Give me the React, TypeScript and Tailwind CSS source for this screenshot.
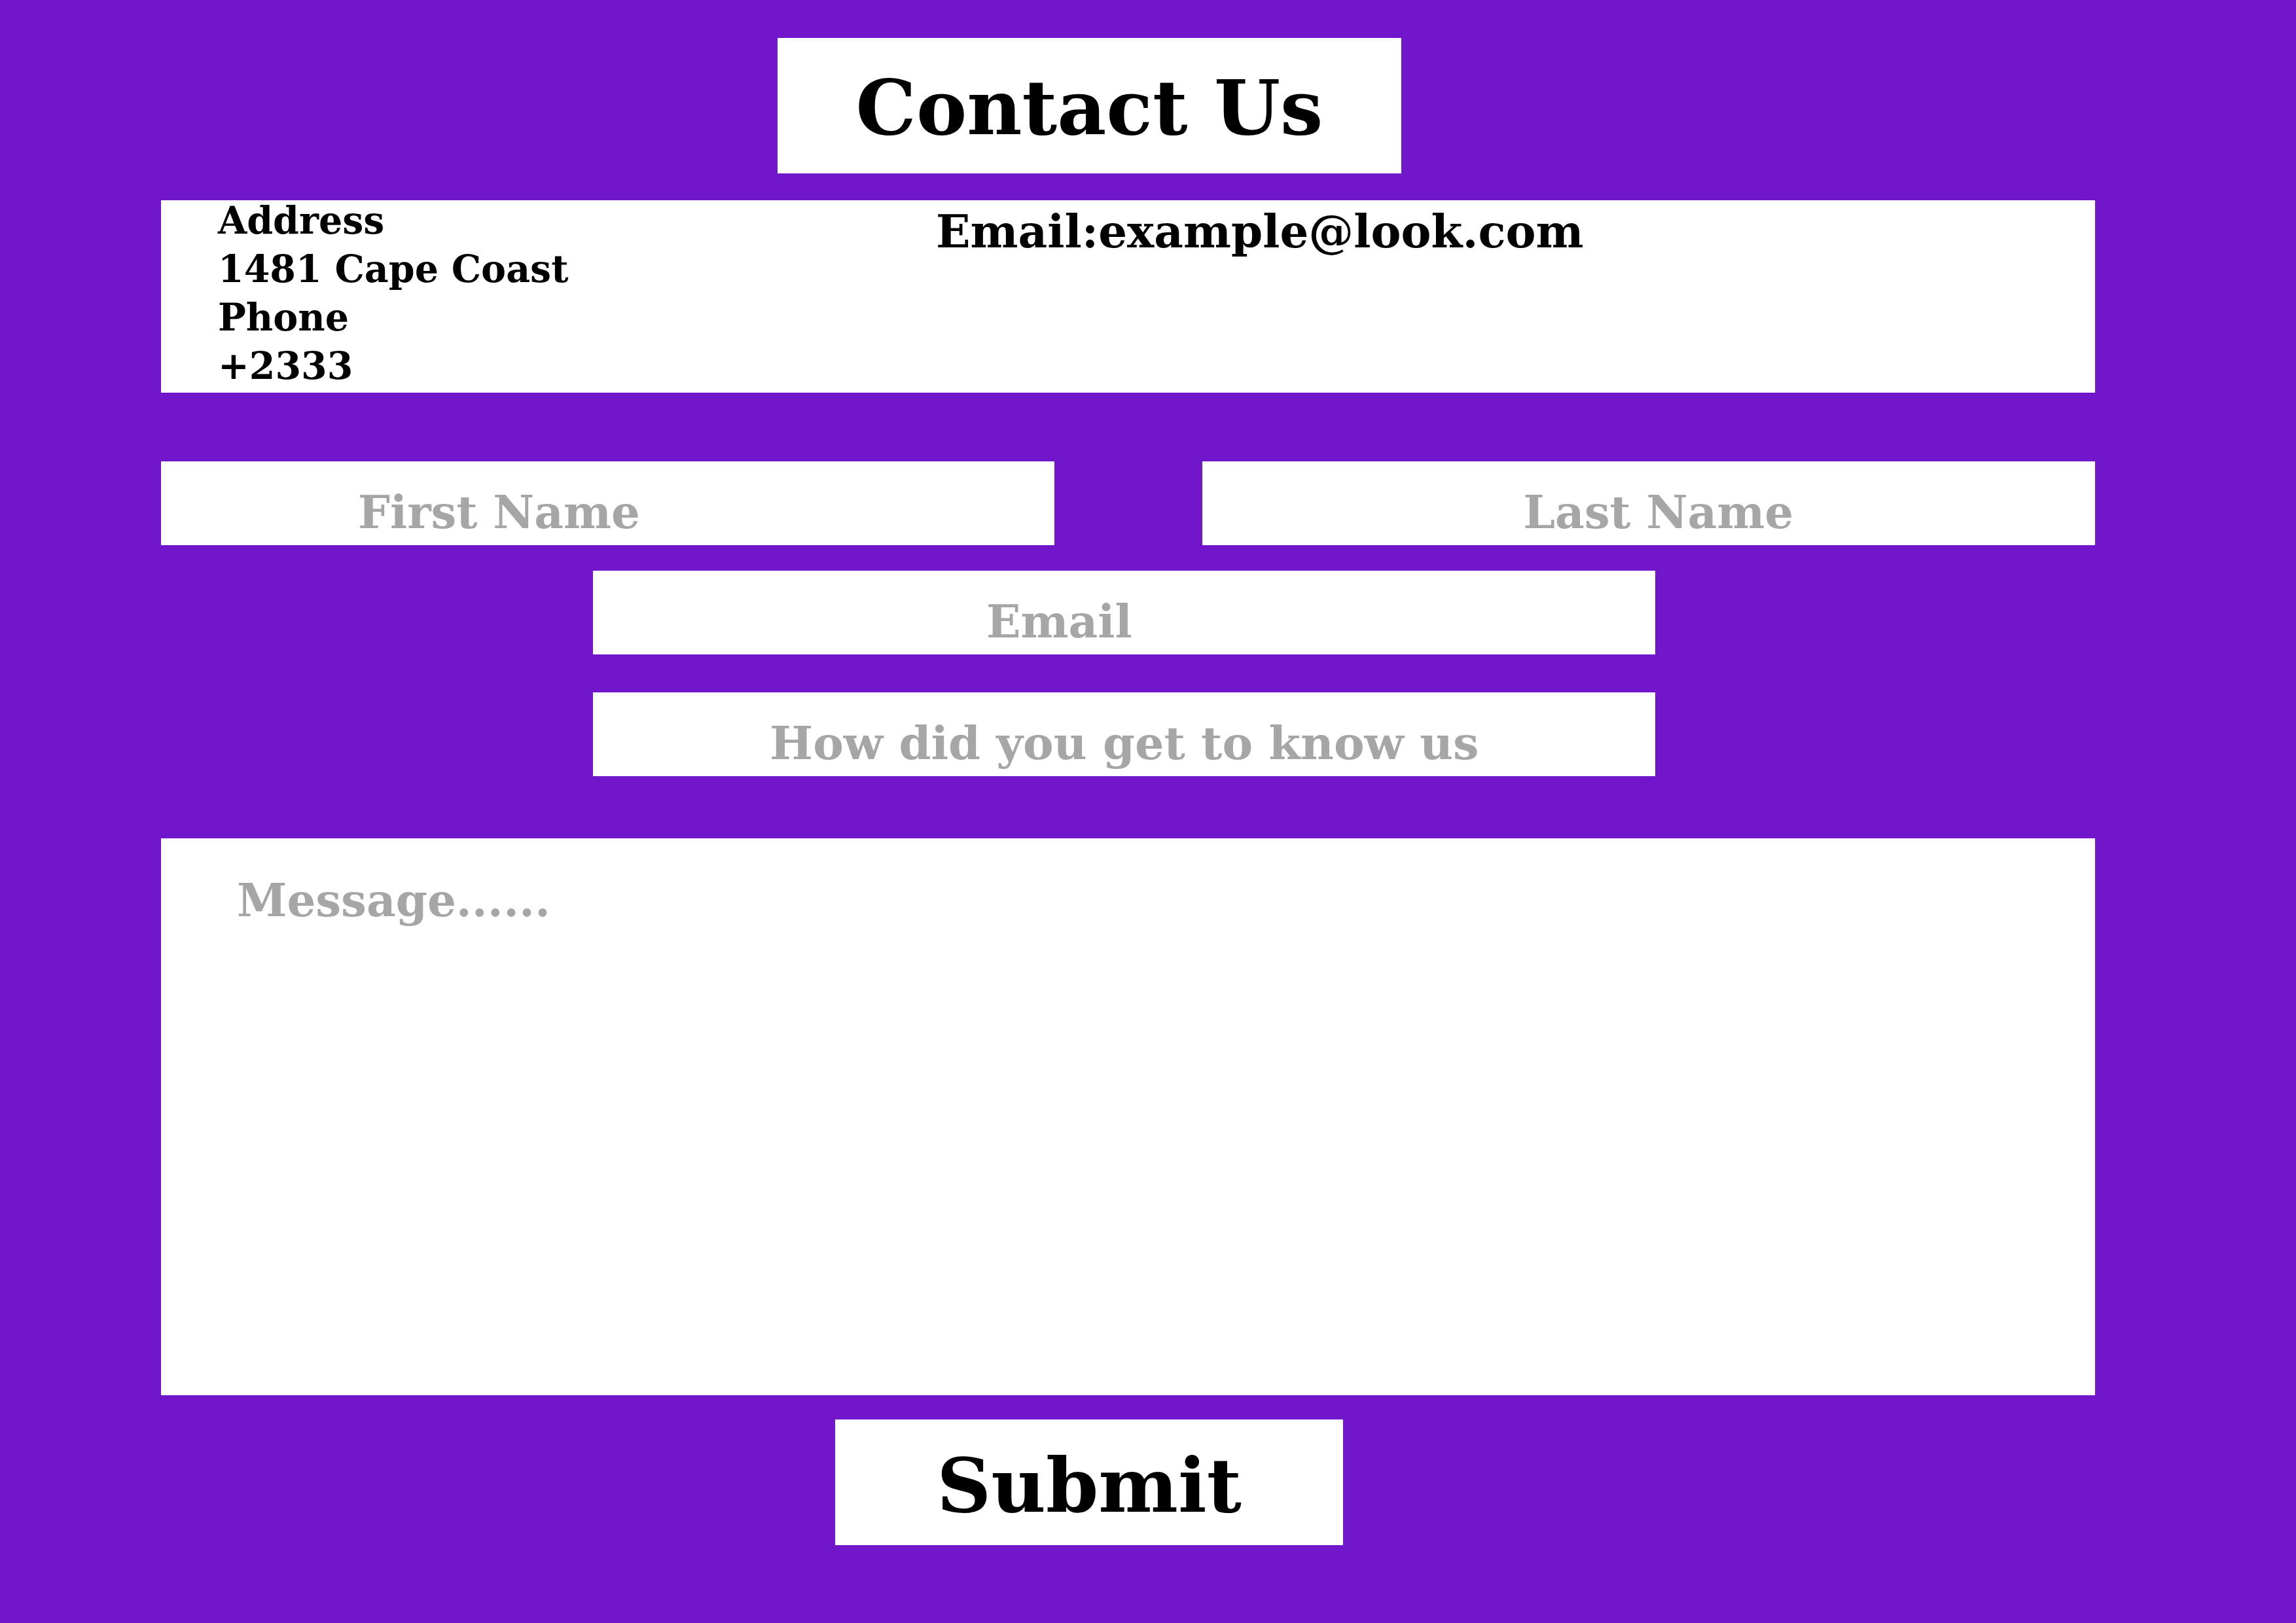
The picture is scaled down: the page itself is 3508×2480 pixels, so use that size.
export default function App() {
    return (
        <div className="h-[2480px] w-[3508px] overflow-hidden bg-[#7216cc] font-['DejaVu_Serif',serif] font-bold text-black">
            <div className="flex w-full flex-col pl-[246px] pr-[307px] pt-[58px]">
                <header className="ml-[942px] flex h-[207px] w-[953px] justify-center bg-white pt-[48px]">
                    <h1 className="text-[116px] leading-none">Contact Us</h1>
                </header>

                <section className="mt-[41px] flex h-[294px] w-full bg-white">
                    <div className="-mt-[6px] w-[1184px] pl-[87px] text-[57px] leading-[74px]">
                        <p>Address</p>
                        <p>1481 Cape Coast</p>
                        <p>Phone</p>
                        <p>+2333</p>
                    </div>
                    <div className="pt-[13px] text-[69px] leading-none">
                        Email:example@look.com
                    </div>
                </section>

                <div className="mt-[105px] grid grid-cols-2 gap-[226px] text-[69px] leading-none text-[#a6a6a6]">
                    <div className="h-[128px] bg-white pl-[301px] pt-[43px]">
                        First Name
                    </div>
                    <div className="h-[128px] bg-white pl-[491px] pt-[43px]">
                        Last Name
                    </div>
                </div>

                <div className="ml-[660px] mt-[39px] h-[128px] w-[1623px] bg-white pl-[601px] pt-[43px] text-[69px] leading-none text-[#a6a6a6]">
                    Email
                </div>

                <div className="ml-[660px] mt-[58px] h-[128px] w-[1623px] bg-white pl-[270px] pt-[43px] text-[70px] leading-none text-[#a6a6a6]">
                    How did you get to know us
                </div>

                <div className="mt-[95px] h-[851px] w-full bg-white pl-[116px] pt-[60px] text-[69px] leading-none text-[#a6a6a6]">
                    Message......
                </div>

                <button className="ml-[1030px] mt-[37px] flex h-[192px] w-[776px] justify-center bg-white pt-[43px]">
                    <span className="text-[115px] leading-none">Submit</span>
                </button>
            </div>
        </div>
    );
}
